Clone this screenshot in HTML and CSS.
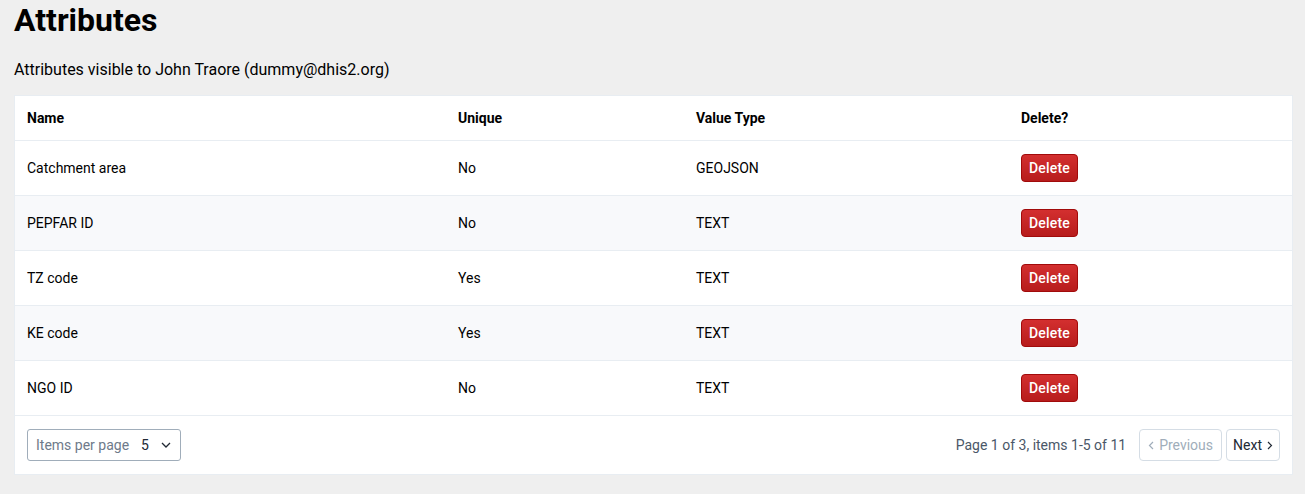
FILE: index.html
```html
<!DOCTYPE html>
<html>
<head>
<meta charset="utf-8">
<link rel="stylesheet" href="styles.css">
</head>
<body>
<div class="page">
  <h1 class="title">Attributes</h1>
  <p class="subtitle">Attributes visible to John Traore (dummy@dhis2.org)</p>
  <div class="card">
    <table class="table">
      <colgroup>
        <col class="c-name"><col class="c-unique"><col class="c-type"><col class="c-del">
      </colgroup>
      <thead>
        <tr><th>Name</th><th>Unique</th><th>Value Type</th><th>Delete?</th></tr>
      </thead>
      <tbody>
        <tr><td>Catchment area</td><td>No</td><td>GEOJSON</td><td><button class="btn-delete">Delete</button></td></tr>
        <tr><td>PEPFAR ID</td><td>No</td><td>TEXT</td><td><button class="btn-delete">Delete</button></td></tr>
        <tr><td>TZ code</td><td>Yes</td><td>TEXT</td><td><button class="btn-delete">Delete</button></td></tr>
        <tr><td>KE code</td><td>Yes</td><td>TEXT</td><td><button class="btn-delete">Delete</button></td></tr>
        <tr><td>NGO ID</td><td>No</td><td>TEXT</td><td><button class="btn-delete">Delete</button></td></tr>
      </tbody>
    </table>
    <div class="footer">
      <div class="select">
        <span class="select-label">Items per page</span>
        <span class="select-value">5</span>
        <svg class="chev" width="10" height="6" viewBox="0 0 10 6"><path d="M1 1l4 4 4-4" fill="none" stroke="#212934" stroke-width="1.3"/></svg>
      </div>
      <div class="pager">
        <span class="pager-summary">Page 1 of 3, items 1-5 of 11</span>
        <button class="pbtn prev disabled"><svg width="6" height="9" viewBox="0 0 6 9"><path d="M5 1L1.5 4.5 5 8" fill="none" stroke="currentColor" stroke-width="1.2"/></svg>Previous</button>
        <button class="pbtn next">Next<svg width="6" height="9" viewBox="0 0 6 9"><path d="M1 1l3.5 3.5L1 8" fill="none" stroke="currentColor" stroke-width="1.2"/></svg></button>
      </div>
    </div>
  </div>
</div>
</body>
</html>
```
FILE: styles.css
```css
html, body {
  margin: 0;
  padding: 0;
  background: #efefef;
  font-family: Roboto, "Noto Sans", sans-serif;
  color: #212934;
}
.page {
  padding: 1px 12px 0 14px;
}
.title {
  margin: 0;
  font-size: 32px;
  line-height: 38px;
  font-weight: 700;
  color: #000;
}
.subtitle {
  margin: 21px 0 16px;
  font-size: 16px;
  line-height: 19px;
  color: #000;
}
.card {
  background: #fff;
  border: 1px solid #e8edf2;
  width: 1277px;
}
.table {
  width: 100%;
  border-collapse: collapse;
  table-layout: fixed;
  font-size: 14px;
}
.c-name { width: 431px; }
.c-unique { width: 238px; }
.c-type { width: 325px; }
.c-del { width: auto; }
.table th {
  text-align: left;
  font-weight: 700;
  height: 44px;
  padding: 0 12px;
  color: #000;
  border-bottom: 1px solid #e8edf2;
}
.table td {
  height: 54px;
  padding: 0 12px;
  border-bottom: 1px solid #e8edf2;
  color: #000;
}
.table tbody tr:nth-child(even) td {
  background: #f8f9fb;
}
.btn-delete {
  font-family: Roboto, sans-serif;
  font-size: 14px;
  font-weight: 500;
  color: #fff;
  height: 28px;
  width: 57px;
  padding: 0;
  border: 1px solid #a10b0b;
  border-radius: 4px;
  background: linear-gradient(180deg, #d32f2f 0%, #b71c1c 100%);
  letter-spacing: 0.2px;
}
.footer {
  display: flex;
  justify-content: space-between;
  align-items: center;
  padding: 13px 12px 13px 12px;
}
.select {
  display: flex;
  align-items: center;
  box-sizing: border-box;
  width: 154px;
  height: 32px;
  border: 1px solid #a0adba;
  border-radius: 3px;
  padding: 0 0 0 8px;
  font-size: 14px;
}
.select-label {
  color: #6e7a8a;
}
.select-value {
  margin-left: 12px;
  color: #212934;
}
.chev {
  margin-left: 12px;
}
.pager {
  display: flex;
  align-items: center;
  font-size: 14px;
}
.pager-summary {
  color: #4a5768;
  margin-right: 13px;
}
.pbtn {
  display: flex;
  align-items: center;
  gap: 5px;
  height: 32px;
  box-sizing: border-box;
  font-family: Roboto, sans-serif;
  font-size: 14px;
  color: #212934;
  background: #fff;
  border: 1px solid #d5dde5;
  border-radius: 4px;
}
.pbtn.prev {
  padding: 0 8px;
  color: #a0adba;
}
.pbtn.next {
  padding: 0 6px;
  margin-left: 4px;
}
```
